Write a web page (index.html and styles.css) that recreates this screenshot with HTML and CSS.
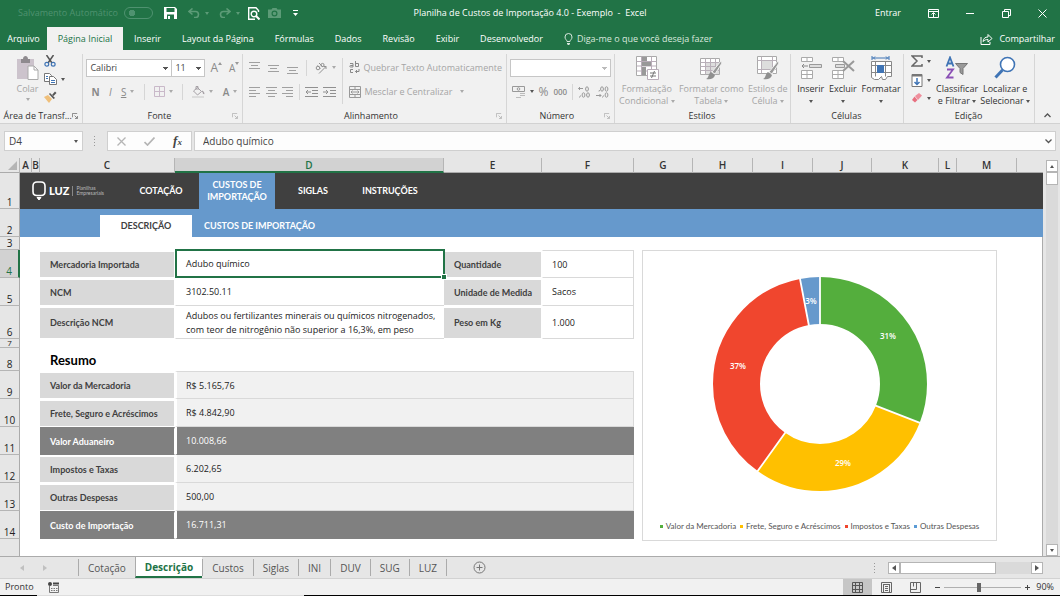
FILE: index.html
```html
<!DOCTYPE html>
<html lang="pt-BR">
<head>
<meta charset="utf-8">
<meta name="viewport" content="width=device-width, initial-scale=1">
<title>Planilha de Custos de Importação 4.0 - Exemplo - Excel</title>
<link rel="stylesheet" href="styles.css">
</head>
<body>
<div class="app">

<header class="titlebar">
  <div class="quick">
    <label class="autosave" for="autosave">Salvamento Automático</label>
    <input class="switch" id="autosave" type="checkbox" disabled>
    <button class="qbtn save" aria-label="Salvar"><svg width="13" height="12" viewBox="0 0 13 12"><path d="M0 0h11l2 2v10H0z" fill="#fff"/><path d="M2.500 1h8v4h-8zM3 7.500h7V12H3z" fill="#217346"/><path d="M4 9h2v3H4z" fill="#fff"/></svg></button>
    <button class="qbtn undo" aria-label="Desfazer"><svg width="12" height="10" viewBox="0 0 12 10" fill="none" stroke="#5c9b77" stroke-width="1.600"><path d="M4.500.5 1 3.500l3.500 3M1 3.500h6.500a3 3 0 0 1 0 6H6"/></svg><i class="caret"></i></button>
    <button class="qbtn redo" aria-label="Refazer"><svg width="12" height="10" viewBox="0 0 12 10" fill="none" stroke="#5c9b77" stroke-width="1.600"><path d="M7.500.5 11 3.500l-3.500 3M11 3.500H4.500a3 3 0 0 0 0 6H6"/></svg><i class="caret"></i></button>
    <button class="qbtn preview" aria-label="Visualizar impressão"><svg width="12" height="13" viewBox="0 0 12 13" fill="none" stroke="#fff" stroke-width="1.400"><path d="M10.500 5V3.500L8 .7H.7v11.600H7"/><circle cx="6" cy="7" r="2.800"/><path d="m8 9 3.500 3.500" stroke-width="2"/></svg></button>
    <button class="qbtn camera" aria-label="Câmera"><svg width="13" height="10" viewBox="0 0 13 10"><path d="M0 1.500h3.500L4.500 0h4l1 1.500H13V10H0z" fill="#5c9b77"/><circle cx="6.500" cy="5.500" r="2.400" fill="none" stroke="#217346" stroke-width="1.200"/></svg></button>
    <button class="qbtn more" aria-label="Personalizar"><svg width="5" height="6" viewBox="0 0 5 6" fill="#fff"><path d="M0 0h5v1H0zM0 3h5L2.500 6z"/></svg></button>
  </div>
  <h1 class="title">Planilha de Custos de Importação 4.0 - Exemplo &nbsp;-&nbsp; Excel</h1>
  <div class="window">
    <button class="signin">Entrar</button>
    <button class="wbtn" aria-label="Opções da faixa"><svg width="11" height="9" viewBox="0 0 11 9" fill="none" stroke="#fff"><path d="M.5.5h10v8H.5zM.5 2.500h10M5.500 8V4M3.500 5.500l2-2 2 2"/></svg></button>
    <button class="wbtn" aria-label="Minimizar"><svg width="9" height="9" viewBox="0 0 9 9" stroke="#fff"><path d="M0 4.500h8"/></svg></button>
    <button class="wbtn" aria-label="Restaurar"><svg width="9" height="9" viewBox="0 0 9 9" fill="none" stroke="#fff"><path d="M.5 2.500h6v6h-6zM2.500 2.500v-2h6v6h-2"/></svg></button>
    <button class="wbtn" aria-label="Fechar"><svg width="9" height="9" viewBox="0 0 9 9" stroke="#fff"><path d="m.5.5 8 8M8.500.5l-8 8"/></svg></button>
  </div>
</header>

<nav class="tabs">
  <button class="tab file">Arquivo</button>
  <button class="tab active">Página Inicial</button>
  <button class="tab">Inserir</button>
  <button class="tab">Layout da Página</button>
  <button class="tab">Fórmulas</button>
  <button class="tab">Dados</button>
  <button class="tab">Revisão</button>
  <button class="tab">Exibir</button>
  <button class="tab">Desenvolvedor</button>
  <button class="tell"><svg width="9" height="12" viewBox="0 0 9 12" fill="none" stroke="#d9e8df"><path d="M3 8.500C3 7 1 6.500 1 4a3.500 3.500 0 0 1 7 0c0 2.500-2 3-2 4.500zM3 10.500h3M3.500 11.500h2"/></svg>Diga-me o que você deseja fazer</button>
  <button class="share"><svg width="13" height="12" viewBox="0 0 13 12" fill="none" stroke="#fff"><path d="M1 4v7.500h9V9M3 8.500C3.500 5.500 5 4 8 4V1.500l4 4-4 3.500V6.500C6 6.500 4.500 7 3 8.500z"/></svg>Compartilhar</button>
</nav>

<section class="ribbon">
  <div class="group g-clip">
    <div class="body">
      <button class="big off paste"><svg width="23" height="24" viewBox="0 0 23 24"><path d="M1 3h17v20H1z" fill="#ccc3cc"/><path d="M5 3h2c0-4 5-4 5 0h2v4H5z" fill="#8e8a8e"/><path d="M12 10h6l4 4v9.500H12z" fill="#fff" stroke="#aaa"/><path d="M18 10v4h4" fill="none" stroke="#aaa"/></svg><span>Colar</span><i class="caret"></i></button>
      <div class="stack clipstack">
        <button class="ib" aria-label="Recortar"><svg width="12" height="12" viewBox="0 0 12 12" fill="none"><path d="M2.500 0 8 8M9.500 0 4 8" stroke="#555" stroke-width="1.500"/><circle cx="2.800" cy="9.300" r="1.900" stroke="#3f74b5" stroke-width="1.200"/><circle cx="9.200" cy="9.300" r="1.900" stroke="#3f74b5" stroke-width="1.200"/></svg></button>
        <button class="ib" aria-label="Copiar"><svg width="13" height="12" viewBox="0 0 13 12" fill="#fff" stroke="#777"><path d="M.5.500h5l2 2v6h-7z"/><path d="M5.500 3.500h4l3 3v5h-7z"/><path d="M2 3.500h2M2 5.500h2M7 7.500h4M7 9.500h4" stroke="#3f74b5"/></svg><i class="caret dark"></i></button>
        <button class="ib" aria-label="Pincel"><svg width="13" height="12" viewBox="0 0 13 12"><path d="M0 6 4 4l4 4-3 4z" fill="#efbf7a"/><path d="m5 3 1-1 5 5-1.500 1z" fill="#555"/><path d="m8 4 3-3.500L12.500 2 9.500 5z" fill="#555"/></svg></button>
      </div>
    </div>
    <footer><span>Área de Transf...</span><svg class="launch dk" width="6" height="6" viewBox="0 0 7 7"><path d="M.5 5V.5H6M3 3l3 3M6.500 3.500v3h-3"/></svg></footer>
  </div>

  <div class="group g-font">
    <div class="body rows">
      <div class="line">
        <select class="sel fname" aria-label="Fonte"><option>Calibri</option></select><select class="sel fsize" aria-label="Tamanho"><option>11</option></select>
        <button class="ib grow" aria-label="Aumentar fonte">A<svg width="4" height="3" viewBox="0 0 4 3"><path d="M0 3h4L2 0z" fill="#999"/></svg></button>
        <button class="ib shrink" aria-label="Diminuir fonte">A<svg width="4" height="3" viewBox="0 0 4 3"><path d="M0 0h4L2 3z" fill="#999"/></svg></button>
      </div>
      <div class="line second">
        <button class="ib ltr"><b>N</b></button><button class="ib ltr"><em>I</em></button><button class="ib ltr"><u>S</u><i class="caret"></i></button><i class="sep"></i>
        <button class="ib" aria-label="Bordas"><svg width="11" height="11" viewBox="0 0 11 11" fill="none" stroke="#c9b9c9"><path d="M.5.5h10v10H.5zM5.500.5v10M.5 5.500h10"/></svg><i class="caret"></i></button><i class="sep"></i>
        <button class="ib" aria-label="Preenchimento"><svg width="13" height="12" viewBox="0 0 13 12" fill="none" stroke="#a5a0a5"><path d="m1.500 5 4-3.500 4 4-4 3.500zM4 4V.500h2V4" /><path d="M10 5c1.500 1 2 2 1.500 3" stroke-width="1.500"/><path d="M0 11h12" stroke="#dcdcdc" stroke-width="2"/></svg><i class="caret"></i></button>
        <button class="ib ltr fcolor">A<i class="caret"></i></button>
      </div>
    </div>
    <footer><span>Fonte</span><svg class="launch" width="6" height="6" viewBox="0 0 7 7"><path d="M.5 5V.5H6M3 3l3 3M6.500 3.500v3h-3"/></svg></footer>
  </div>

  <div class="group g-align">
    <div class="body">
      <div class="rows alignleft">
        <div class="line">
          <button class="ib" aria-label="Alinhar acima"><svg width="11" height="12" viewBox="0 0 11 12" stroke="#a0a0a0"><path d="M0 .5h11M2 3.500h7M0 6.500h11"/></svg></button>
          <button class="ib" aria-label="Alinhar no meio"><svg width="11" height="12" viewBox="0 0 11 12" stroke="#a0a0a0"><path d="M0 3.500h11M2 6.500h7M0 9.500h11"/></svg></button>
          <button class="ib" aria-label="Alinhar abaixo"><svg width="11" height="12" viewBox="0 0 11 12" stroke="#a0a0a0"><path d="M0 5.500h11M2 8.500h7M0 11.500h11"/></svg></button>
          <i class="sep"></i>
          <button class="ib" aria-label="Orientação"><svg width="13" height="12" viewBox="0 0 13 12" fill="none" stroke="#909090"><circle cx="3" cy="6" r="1.800"/><path d="m2.500 3.500 3 3"/><path d="m4 1 4 4"/><circle cx="7.500" cy="3" r="1.600"/><path d="m4 11.500 7-7M8.500 4.500H11V7"/></svg><i class="caret"></i></button>
        </div>
        <div class="line">
          <button class="ib" aria-label="Esquerda"><svg width="11" height="10" viewBox="0 0 11 10" stroke="#a0a0a0"><path d="M0 .5h11M0 3.500h7M0 6.500h11M0 9.500h7"/></svg></button>
          <button class="ib" aria-label="Centro"><svg width="11" height="10" viewBox="0 0 11 10" stroke="#a0a0a0"><path d="M0 .5h11M2 3.500h7M0 6.500h11M2 9.500h7"/></svg></button>
          <button class="ib" aria-label="Direita"><svg width="11" height="10" viewBox="0 0 11 10" stroke="#a0a0a0"><path d="M0 .5h11M4 3.500h7M0 6.500h11M4 9.500h7"/></svg></button>
          <i class="sep"></i>
          <button class="ib" aria-label="Diminuir recuo"><svg width="13" height="10" viewBox="0 0 13 10" fill="none" stroke="#909090"><path d="M0 .5h13M7 3.500h6M7 6.500h6M0 9.500h13M6 5H1M3 3 1 5l2 2"/></svg></button>
          <button class="ib" aria-label="Aumentar recuo"><svg width="13" height="10" viewBox="0 0 13 10" fill="none" stroke="#909090"><path d="M0 .5h13M7 3.500h6M7 6.500h6M0 9.500h13M0 5h5M3 3l2 2-2 2"/></svg></button>
        </div>
      </div>
      <i class="sep tall"></i>
      <div class="rows alignright">
        <button class="txt"><svg width="11" height="13" viewBox="0 0 11 13" fill="none" stroke="#888"><path d="M1 2.500h3V6H1.500c-1 0-1-1.500 0-1.500H4M6.500 0v5.500h3v-3h-3M4 8.500H1.500v3H4M10 8v2.500H6.500M8 9l-1.500 1.500L8 12"/></svg>Quebrar Texto Automaticamente</button>
        <button class="txt"><svg width="12" height="12" viewBox="0 0 12 12" fill="none" stroke="#999"><path d="M.5.5h11v11H.5zM.5 3.500h11M.5 8.500h11M6 .5v3M6 8.500v3M2 6h8M3.500 4.500 2 6l1.500 1.500M8.500 4.500 10 6 8.500 7.500"/></svg>Mesclar e Centralizar<i class="caret"></i></button>
      </div>
    </div>
    <footer><span>Alinhamento</span><svg class="launch" width="6" height="6" viewBox="0 0 7 7"><path d="M.5 5V.5H6M3 3l3 3M6.500 3.500v3h-3"/></svg></footer>
  </div>

  <div class="group g-num">
    <div class="body rows">
      <div class="line"><select class="sel nfmt" aria-label="Formato de número"><option></option></select></div>
      <div class="line nums">
        <button class="ib" aria-label="Moeda"><svg width="14" height="12" viewBox="0 0 14 12" fill="none" stroke="#999"><path d="M.5.5h12v5H.5z"/><circle cx="6.500" cy="3" r="1.300"/><path d="M8 7.500h5M8 9.500h5M4 11.500h5" stroke="#bbb"/></svg><i class="caret dark"></i></button>
        <button class="ib pct">%</button>
        <button class="ib zeros">000</button>
        <i class="sep"></i>
        <button class="ib dec" aria-label="Aumentar casas"><svg width="13" height="12" viewBox="0 0 13 12" fill="none" stroke="#999"><path d="M5 2.500H.5M2 1 .5 2.500 2 4M2.500 9.500l-1 2"/><ellipse cx="9" cy="3" rx="1.400" ry="2.200"/><ellipse cx="5.500" cy="9" rx="1.400" ry="2.200"/><ellipse cx="10" cy="9" rx="1.400" ry="2.200"/></svg></button>
        <button class="ib dec" aria-label="Diminuir casas"><svg width="13" height="12" viewBox="0 0 13 12" fill="none" stroke="#999"><path d="M0 9.500h5M3.500 8 5 9.500 3.500 11M7.500 9.500l-1 2M3.500 4l-.5 1.500"/><ellipse cx="6" cy="3" rx="1.400" ry="2.200"/><ellipse cx="10.500" cy="3" rx="1.400" ry="2.200"/><ellipse cx="10.500" cy="9" rx="1.400" ry="2.200"/></svg></button>
      </div>
    </div>
    <footer><span>Número</span><svg class="launch" width="6" height="6" viewBox="0 0 7 7"><path d="M.5 5V.5H6M3 3l3 3M6.500 3.500v3h-3"/></svg></footer>
  </div>

  <div class="group g-style">
    <div class="body spread">
      <button class="big off"><svg width="24" height="24" viewBox="0 0 24 24" fill="none"><path d="M1.500.5h20v19h-20z" fill="#fff" stroke="#aaa"/><path d="M6.500.5v19M16.500.5v19M1.500 5.500h20M1.500 10h20M1.500 15h20" stroke="#b9adb9"/><path d="M7 1h5v4H7zM7 6h9v4H7zM7 11h4v4H7zM7 15h4v4H7z" fill="#999"/><path d="M12.500 13.500h11v10h-11z" fill="#fff" stroke="#b9adb9"/><path d="M15 17h6M15 20h6M19.500 15l-3 7" stroke="#777"/></svg><span>Formatação<br>Condicional <i class="caret"></i></span></button>
      <button class="big off"><svg width="24" height="24" viewBox="0 0 24 24" fill="none"><path d="M1.500 2.500h19v16h-19z" fill="#fff" stroke="#aaa"/><path d="M6 7h14v11H6z" fill="#ddd"/><path d="M6.500 2.500v16M11.500 2.500v16M16.500 2.500v16M1.500 6.500h19M1.500 10.500h19M1.500 14.500h19" stroke="#b9b0b9"/><path d="m23 7-7 11-3-2L22 5z" fill="#999" stroke="#f1f1f1"/><path d="m12 16 4 3c-1 4-5 5-9 4 3-1 2-5 5-7z" fill="#8f8f8f"/></svg><span>Formatar como<br>Tabela <i class="caret"></i></span></button>
      <button class="big off"><svg width="24" height="24" viewBox="0 0 24 24" fill="none"><path d="M1.500.5h19v17h-19z" fill="#fff" stroke="#aaa"/><path d="M5.500 4.500h11v9h-11z" fill="#ddd" stroke="#b9b0b9"/><path d="M5.500.5v17M16.500.5v17M1.500 4.500h19M1.500 13.500h19" stroke="#b9b0b9"/><path d="m23 7-7 11-3-2L22 5z" fill="#999" stroke="#f1f1f1"/><path d="m12 16 4 3c-1 4-5 5-9 4 3-1 2-5 5-7z" fill="#8f8f8f"/></svg><span>Estilos de<br>Célula <i class="caret"></i></span></button>
    </div>
    <footer><span>Estilos</span></footer>
  </div>

  <div class="group g-cells">
    <div class="body spread">
      <button class="big"><svg width="22" height="24" viewBox="0 0 22 24" fill="#fff" stroke="#aaa"><path d="M1.500 1.500h11v4h-11zM7 1.500v4M1.500 14.500h11v8h-11zM7 14.500v8M1.500 18.500h11"/><path d="M9.500 8.500h12v3h-12z" fill="#ddd" stroke="#999"/><path d="M8 10H2M4 8l-2 2 2 2" fill="none" stroke="#888"/></svg><span>Inserir<br><i class="caret dark"></i></span></button>
      <button class="big"><svg width="24" height="24" viewBox="0 0 24 24" fill="#fff" stroke="#aaa"><path d="M1.500 1.500h11v4h-11zM7 1.500v4M1.500 14.500h11v8h-11zM7 14.500v8M1.500 18.500h11"/><path d="M4.500 8.500h9v3h-9z" fill="#ddd" stroke="#999"/><path d="m12 5 11 10M23 5 12 15" stroke="#999" stroke-width="2"/></svg><span>Excluir<br><i class="caret dark"></i></span></button>
      <button class="big"><svg width="24" height="24" viewBox="0 0 24 24" fill="#fff" stroke="#888"><path d="M2.500 5.500h20v15h-4l-2 3h-3l-1-3-3 3h-4l-3-2zM6.500 5.500v15M16.500 5.500v15M2.500 9.500h20M2.500 16.500h20"/><path d="M8.500 9.500h6v7h-6z" fill="#3f74b5" stroke="#3f74b5"/><path d="M3 2h17M3 0v4M20 0v4M6 .500 4.500 2 6 3.500M17 .500 18.500 2 17 3.500" fill="none" stroke="#3f74b5"/></svg><span>Formatar<br><i class="caret dark"></i></span></button>
    </div>
    <footer><span>Células</span></footer>
  </div>

  <div class="group g-edit">
    <div class="body">
      <div class="stack editstack">
        <button class="ib" aria-label="Soma"><svg width="12" height="12" viewBox="0 0 12 12" fill="none" stroke="#666" stroke-width="1.500"><path d="M11 3V1H1l5 5-5 5h10V9"/></svg><i class="caret dark"></i></button>
        <button class="ib" aria-label="Preencher"><svg width="12" height="13" viewBox="0 0 12 13" fill="#fff" stroke="#777"><path d="M1 .5h10v12H1z"/><path d="M1 1.500h10" stroke-width="2"/><path d="M6 4v6.500M3.500 8 6 10.500 8.500 8" fill="none" stroke="#3f74b5" stroke-width="1.500"/></svg><i class="caret dark"></i></button>
        <button class="ib" aria-label="Limpar"><svg width="12" height="10" viewBox="0 0 12 10"><path d="m4 3 4-3 3 2.500L7 7z" fill="#ef8f9d"/><path d="M3.500 3.500 6.500 7 4 9.500 1 7z" fill="#e87080"/></svg><i class="caret dark"></i></button>
      </div>
      <button class="big"><svg width="24" height="24" viewBox="0 0 24 24" fill="none"><path d="m1.500 10.500 3.500-9 3.500 9M2.700 7.500h4.600" stroke="#3f74b5" stroke-width="1.800"/><path d="M2 13.500h6l-6 8h6.500" stroke="#8a4fb5" stroke-width="1.800"/><path d="M10.500 7.500h12l-4.500 5v6l-3-2v-4z" fill="#999" stroke="#777"/></svg><span>Classificar<br>e Filtrar <i class="caret dark"></i></span></button>
      <button class="big"><svg width="24" height="24" viewBox="0 0 24 24" fill="none" stroke="#3f74b5"><circle cx="14.500" cy="8.500" r="7" fill="#fff" stroke-width="1.600"/><path d="m9.500 14-7 7.500" stroke-width="3"/></svg><span>Localizar e<br>Selecionar <i class="caret dark"></i></span></button>
    </div>
    <footer><span>Edição</span></footer>
  </div>
  <button class="collapse" aria-label="Recolher faixa"><svg width="7" height="5" viewBox="0 0 7 5" fill="none" stroke="#555" stroke-width="1.300"><path d="m.5 4 3-3 3 3"/></svg></button>
</section>

<section class="formula">
  <div class="namebox"><input aria-label="Caixa de nome" value="D4"><i class="caret dark"></i></div>
  <svg class="grip" width="2" height="10" viewBox="0 0 2 10" fill="#999"><path d="M0 0h1v1H0zM0 3h1v1H0zM0 6h1v1H0zM0 9h1v1H0z"/></svg>
  <div class="fbtns">
    <button aria-label="Cancelar"><svg width="9" height="9" viewBox="0 0 9 9" stroke="#b5b5b5" stroke-width="1.300"><path d="m.5.5 8 8M8.500.5l-8 8"/></svg></button>
    <button aria-label="Inserir"><svg width="11" height="9" viewBox="0 0 11 9" fill="none" stroke="#b5b5b5" stroke-width="1.700"><path d="m.5 5 3 3 7-7.500"/></svg></button>
    <button class="fx"><em>f<small>x</small></em></button>
  </div>
  <div class="fbox"><input aria-label="Barra de fórmulas" value="Adubo químico"><svg width="7" height="5" viewBox="0 0 7 5" fill="none" stroke="#555" stroke-width="1.300"><path d="m.5.5 3 3 3-3"/></svg></div>
</section>

<main class="workspace">
<div class="sheetwrap">
<table class="sheet">
  <colgroup><col class="w20"><col class="w12"><col class="w8"><col class="w135"><col class="w269"><col class="w98"><col class="w92"><col class="w59"><col class="w60"><col class="w60"><col class="w59"><col class="w67"><col class="w18"><col class="w60"><col class="w26"></colgroup>
  <thead>
    <tr class="cols"><th class="corner"><svg width="9" height="9" viewBox="0 0 9 9"><path d="M9 0v9H0z" fill="#b5b5b5"/></svg></th><th>A</th><th>B</th><th>C</th><th class="on">D</th><th>E</th><th>F</th><th>G</th><th>H</th><th>I</th><th>J</th><th>K</th><th>L</th><th>M</th><th class="end"></th></tr>
  </thead>
  <tbody>
    <tr class="h36"><th class="rn">1</th><td class="navcell" colspan="14"><nav class="mainnav">
      <div class="brand"><svg width="14" height="20" viewBox="0 0 14 20" fill="none" stroke="#fff" stroke-width="1.600"><path d="M5 14.500c-3 0-4-1.500-4-4V5c0-2.500 1.500-4 4-4h4c2.500 0 4 1.500 4 4v5.500c0 2.500-1 4-4 4z"/><path d="M5 16.500h4L7 19z" fill="#fff" stroke-width="1"/></svg><strong>LUZ</strong><small>Planilhas<br>Empresariais</small></div>
      <a href="#" class="n1">COTAÇÃO</a><a href="#" class="n2">CUSTOS DE<br>IMPORTAÇÃO</a><a href="#" class="n3">SIGLAS</a><a href="#" class="n4">INSTRUÇÕES</a>
    </nav></td></tr>
    <tr class="h28"><th class="rn">2</th><td class="subcell" colspan="14"><nav class="subnav"><a href="#" class="cur">DESCRIÇÃO</a><a href="#">CUSTOS DE IMPORTAÇÃO</a></nav></td></tr>
    <tr class="h13"><th class="rn">3</th><td colspan="14"></td></tr>
    <tr class="h28"><th class="rn on">4</th><td></td><td></td><th class="lab">Mercadoria Importada</th><td class="val selected">Adubo químico</td><th class="lab">Quantidade</th><td class="val side top">100</td>
      <td class="chartcell" colspan="8" rowspan="12">
        <figure class="chart">
          <svg class="donut" viewBox="0 0 216 216" role="img" aria-label="Composição do custo de importação">
            <g fill="none" stroke-width="47" transform="rotate(-90 108 108)">
              <circle cx="108" cy="108" r="83.500" stroke="#54ae3d" pathLength="10000" stroke-dasharray="3091 20000"/>
              <circle cx="108" cy="108" r="83.500" stroke="#ffc000" pathLength="10000" stroke-dasharray="2898 20000" stroke-dashoffset="-3091"/>
              <circle cx="108" cy="108" r="83.500" stroke="#f0462e" pathLength="10000" stroke-dasharray="3712 20000" stroke-dashoffset="-5989"/>
              <circle cx="108" cy="108" r="83.500" stroke="#6699cc" pathLength="10000" stroke-dasharray="299 20000" stroke-dashoffset="-9701"/>
            </g>
            <path d="M108 49V0M163 129.400l45.600 17.800M73.700 156l-28.600 39.800M97 50 87.800 1.900" stroke="#fff" stroke-width="1.800"/>
            <g class="pct-label"><text x="176" y="63">31%</text><text x="131" y="190">29%</text><text x="26" y="93">37%</text><text x="99" y="28">3%</text></g>
          </svg>
          <figcaption><span class="k1">Valor da Mercadoria</span><span class="k2">Frete, Seguro e Acréscimos</span><span class="k3">Impostos e Taxas</span><span class="k4">Outras Despesas</span></figcaption>
        </figure>
      </td></tr>
    <tr class="h28"><th class="rn">5</th><td></td><td></td><th class="lab">NCM</th><td class="val">3102.50.11</td><th class="lab">Unidade de Medida</th><td class="val side">Sacos</td></tr>
    <tr class="h33"><th class="rn">6</th><td></td><td></td><th class="lab">Descrição NCM</th><td class="val wrap">Adubos ou fertilizantes minerais ou químicos nitrogenados,<br>com teor de nitrogênio não superior a 16,3%, em peso</td><th class="lab">Peso em Kg</th><td class="val side">1.000</td></tr>
    <tr class="h9"><th class="rn tiny">7</th><td colspan="6"></td></tr>
    <tr class="h23"><th class="rn">8</th><td></td><td></td><td class="resumo" colspan="4"><h2>Resumo</h2></td></tr>
    <tr class="h28"><th class="rn">9</th><td></td><td></td><th class="lab">Valor da Mercadoria</th><td class="val sum top" colspan="3">R$ 5.165,76</td></tr>
    <tr class="h28"><th class="rn">10</th><td></td><td></td><th class="lab">Frete, Seguro e Acréscimos</th><td class="val sum" colspan="3">R$ 4.842,90</td></tr>
    <tr class="h28"><th class="rn">11</th><td></td><td></td><th class="lab total">Valor Aduaneiro</th><td class="val sum total" colspan="3">10.008,66</td></tr>
    <tr class="h28"><th class="rn">12</th><td></td><td></td><th class="lab">Impostos e Taxas</th><td class="val sum" colspan="3">6.202,65</td></tr>
    <tr class="h28"><th class="rn">13</th><td></td><td></td><th class="lab">Outras Despesas</th><td class="val sum" colspan="3">500,00</td></tr>
    <tr class="h28"><th class="rn">14</th><td></td><td></td><th class="lab total">Custo de Importação</th><td class="val sum total" colspan="3">16.711,31</td></tr>
    <tr class="h17"><th class="rn last"></th><td colspan="6"></td></tr>
  </tbody>
</table>
</div>
<div class="vscroll"><button aria-label="Para cima"><i class="caret up dark"></i></button><div class="vtrack"><div class="vthumb"></div></div><button aria-label="Para baixo"><i class="caret dark"></i></button></div>
</main>

<nav class="sheets">
  <div class="arrows"><i class="left"></i><i class="right"></i></div>
  <button>Cotação</button><button class="active">Descrição</button><button>Custos</button><button>Siglas</button><button>INI</button><button>DUV</button><button>SUG</button><button>LUZ</button>
  <button class="add" aria-label="Nova planilha"><svg width="13" height="13" viewBox="0 0 13 13" fill="none" stroke="#777"><circle cx="6.500" cy="6.500" r="5.500"/><path d="M6.500 3.500v6M3.500 6.500h6"/></svg></button>
  <svg class="hgrip" width="2" height="10" viewBox="0 0 2 10" fill="#999"><path d="M0 0h1v1H0zM0 3h1v1H0zM0 6h1v1H0zM0 9h1v1H0z"/></svg>
  <div class="hscroll"><button aria-label="Esquerda"><i class="left"></i></button><div class="htrack"><div class="hthumb"></div></div><button aria-label="Direita"><i class="right"></i></button></div>
</nav>

<footer class="status">
  <span>Pronto</span>
  <svg class="macro" width="11" height="11" viewBox="0 0 11 11" fill="none" stroke="#777"><path d="M1.500 4v6.500h9v-7H5"/><path d="M5 1.500h6" stroke="#444" stroke-width="2"/><path d="M3 6.500h7M3 8.500h7" stroke-dasharray="1.500 1"/><circle cx="2" cy="2" r="2" fill="#444" stroke="none"/></svg>
  <div class="views">
    <button class="on" aria-label="Normal"><svg width="11" height="11" viewBox="0 0 11 11" fill="none" stroke="#555"><path d="M.5.5h10v10H.5zM3.500.5v10M7.500.5v10M.5 3.500h10M.5 7.500h10"/></svg></button>
    <button aria-label="Layout da página"><svg width="11" height="11" viewBox="0 0 11 11" fill="none" stroke="#666"><path d="M.5.5h10v10H.5zM2.500 2v8M8.500 2v8M2.500 2.500h6M4 4.500h3M4 6.500h3M4 8.500h3"/></svg></button>
    <button aria-label="Quebra de página"><svg width="11" height="11" viewBox="0 0 11 11" fill="none" stroke="#666"><path d="M.5.5h10v10H.5zM.5 7.500h6v-7M3.500.5v4"/></svg></button>
  </div>
  <button class="zb" aria-label="Reduzir"><svg width="5" height="5" viewBox="0 0 5 5" stroke="#444"><path d="M0 2.500h5"/></svg></button>
  <input class="zoom" type="range" min="10" max="190" value="90" aria-label="Zoom">
  <button class="zb" aria-label="Ampliar"><svg width="5" height="5" viewBox="0 0 5 5" stroke="#444"><path d="M0 2.500h5M2.500 0v5"/></svg></button>
  <output class="zval">90%</output>
</footer>
<div class="taskbar"></div>
</div>
</body>
</html>
```
FILE: styles.css
```css
* { box-sizing: border-box; }
body { margin: 0; font-family: "Open Sans", "Noto Sans", sans-serif; font-size: 9px; line-height: 12px; color: #333; background: #e6e6e6; }
button, input, select { font: inherit; color: inherit; margin: 0; padding: 0; border: 0; background: none; white-space: nowrap; }
a { color: inherit; text-decoration: none; }
svg { display: block; flex: none; }
.app { display: flex; flex-direction: column; min-height: 100vh; }

.caret { display: inline-block; flex: none; width: 0; height: 0; border: 2px solid transparent; border-top: 3px solid #aaa; border-bottom: 0; vertical-align: middle; }
.caret.dark { border-top-color: #555; }
.caret.up { border-top: 0; border-bottom: 3px solid #555; }

/* Title bar */
.titlebar { display: grid; grid-template-columns: 1fr auto 1fr; align-items: center; height: 26px; background: #217346; color: #fff; }
.quick { display: flex; align-items: center; padding-left: 18px; }
.autosave { color: #4f9270; margin-right: 6px; }
.switch { appearance: none; width: 29px; height: 12px; border: 1px solid #4f9270; border-radius: 6px; background: radial-gradient(circle at 7px 5px, #4f9270 3px, transparent 3px); margin-right: 11px; }
.qbtn { display: flex; align-items: center; gap: 5px; margin-right: 10px; }
.qbtn .caret { border-top-color: #5c9b77; }
.undo { margin-left: 1px; }
.redo, .preview { margin-right: 8px; }
.qbtn.more { margin: 0 0 0 2px; }
.title { margin: 0; font-size: 9px; font-weight: 400; }
.window { display: flex; justify-content: flex-end; align-items: center; padding-right: 13px; }
.signin { margin-right: 27px; }
.wbtn { margin-left: 27px; }
.signin + .wbtn { margin-left: 0; }

/* Ribbon tabs */
.tabs { display: flex; align-items: stretch; height: 24px; background: #217346; color: #fff; }
.tab { padding: 1px 10px 0 11px; }
.tab.file { width: 47px; padding: 1px 6px 0; }
.tab.active { width: 76px; padding: 0; background: #f1f1f1; color: #217346; margin-top: 1px; }
.tell { display: flex; align-items: center; gap: 4px; padding: 1px 11px 0; color: #d9e8df; }
.share { display: flex; align-items: center; gap: 6px; margin-left: auto; padding: 1px 5px 0 0; }

/* Ribbon */
.ribbon { display: flex; height: 74px; background: #f1f1f1; border-bottom: 1px solid #d2d2d2; }
.group { display: flex; flex-direction: column; min-width: 0; margin-top: 4px; border-right: 1px solid #d6d6d6; }
.g-clip { flex: 83 0 0; } .g-font { flex: 160 0 0; } .g-align { flex: 264 0 0; } .g-num { flex: 108 0 0; } .g-style { flex: 176 0 0; } .g-cells { flex: 113 0 0; } .g-edit { flex: 131 0 0; }
.group .body { flex: 1; display: flex; min-height: 0; }
.group footer { display: flex; align-items: center; height: 14px; padding: 0 4px 0 3px; color: #333; }
.group footer span { flex: 1; text-align: center; white-space: nowrap; }
.launch { fill: none; stroke: #b5b5b5; }
.launch.dk { stroke: #777; }
.group .rows { display: flex; flex-direction: column; gap: 5px; padding-top: 4px; }
.line { display: flex; align-items: center; height: 19px; }
.ib { display: flex; align-items: center; gap: 4px; color: #8a8a8a; }
.sep { width: 1px; height: 16px; background: #d6d6d6; }
.sep.tall { height: 46px; margin-top: 4px; }
.big { display: flex; flex-direction: column; align-items: center; gap: 3px; padding-top: 2px; }
.big.off { color: #a5a5a5; }
.paste { margin: 0 5px 0 16px; }
.stack { display: flex; flex-direction: column; justify-content: space-between; height: 50px; padding: 1px 0; }
.sel { appearance: none; height: 18px; padding: 0 3px; background-color: #fff; background-image: linear-gradient(#555, #555), linear-gradient(#555, #555), linear-gradient(#555, #555); background-repeat: no-repeat; background-size: 5px 1px, 3px 1px, 1px 1px; background-position: right 3px top 7px, right 4px top 8px, right 5px top 9px; border: 1px solid #c6c6c6; color: #444; border-radius: 0; }
.g-font .line { padding-left: 3px; }
.fname { width: 86px; }
.fsize { width: 34px; margin-left: -1px; }
.grow { font-size: 12px; gap: 0; margin-left: 5px; align-items: flex-start; }
.shrink { font-size: 10px; gap: 0; margin-left: 7px; align-items: flex-start; }
.g-font .second { justify-content: space-between; padding: 0 5px 0 8px; }
.ltr { font-size: 10px; }
.fcolor { font-weight: 600; }
.alignleft .line { width: 99px; padding: 0 6px; justify-content: space-between; }
.alignright { padding-left: 6px; }
.txt { display: flex; align-items: center; gap: 3px; height: 19px; color: #a5a5a5; }
.txt .caret { margin-left: 5px; }
.g-num .rows { padding-left: 3px; padding-right: 3px; }
.nfmt { width: 100%; background-image: linear-gradient(#bbb, #bbb), linear-gradient(#bbb, #bbb), linear-gradient(#bbb, #bbb); }
.nums { justify-content: space-between; padding: 0 2px; }
.pct { font-size: 12px; }
.zeros { font-size: 8px; font-weight: 600; }
.spread { justify-content: space-around; }
.g-style .spread { padding-left: 2px; }
.g-cells .spread { padding-left: 4px; }
.editstack { width: 29px; padding-left: 7px; }
.g-edit .big { flex: 1; min-width: 0; }
.g-edit .body { padding-right: 5px; }
.collapse { flex: 25 0 0; display: flex; justify-content: center; align-items: flex-end; padding-bottom: 5px; }

/* Formula bar */
.formula { display: flex; align-items: center; height: 34px; padding: 0 4px; background: #e6e6e6; font-size: 10px; color: #444; }
.namebox, .fbtns, .fbox { display: flex; align-items: center; height: 20px; background: #fdfdfd; border: 1px solid #cfcfcf; }
.namebox { width: 79px; padding: 0 4px; }
.namebox input { width: 100%; }
.grip { margin: 0 11px; }
.fbtns { width: 85px; justify-content: space-around; margin-right: 2px; }
.fx { font-family: "Liberation Serif", serif; font-size: 13px; font-weight: 700; }
.fx small { font-size: 9px; }
.fbox { flex: 1; padding: 0 3px 0 8px; }
.fbox input { flex: 1; }

/* Sheet */
.workspace { flex: 1; display: flex; background: #e6e6e6; }
.sheetwrap { flex: 1; min-width: 0; background: #fff; border-right: 1px solid #ababab; }
.sheet { width: 100%; table-layout: fixed; border-collapse: separate; border-spacing: 0; line-height: 12px; }
.sheet th, .sheet td { padding: 0; }
.w8 { width: 8px; } .w12 { width: 12px; } .w18 { width: 18px; } .w20 { width: 20px; } .w26 { width: 26px; } .w59 { width: 59px; } .w60 { width: 60px; } .w67 { width: 67px; } .w92 { width: 92px; } .w98 { width: 98px; } .w135 { width: 135px; } .w269 { width: 269px; }
.h9 { height: 9px; } .h13 { height: 13px; } .h17 { height: 17px; } .h23 { height: 23px; } .h28 { height: 28px; } .h33 { height: 33px; } .h36 { height: 36px; }
.cols { height: 15px; }
.cols th { background: #e6e6e6; border-right: 1px solid #b5b5b5; border-bottom: 1px solid #ababab; color: #333; font-size: 10px; font-weight: 600; }
.cols .corner svg { margin-left: auto; margin-right: 2px; }
.cols .on { background: #d2d2d2; color: #217346; border-bottom: 2px solid #217346; }
.cols .end { border-right: 0; }
.rn { background: #e6e6e6; border-right: 1px solid #ababab; border-bottom: 1px solid #b5b5b5; vertical-align: bottom; font-size: 10px; font-weight: 400; color: #222; }
.rn.on { background: #d2d2d2; color: #217346; border-right: 2px solid #217346; }
.rn.tiny { font-size: 8px; line-height: 8px; }
.rn.last { border-bottom: 0; }
.navcell { background: #404040; }
.mainnav { display: flex; align-items: stretch; height: 36px; color: #fff; font-family: Lato, sans-serif; font-weight: 700; }
.mainnav a { display: flex; align-items: center; justify-content: center; text-align: center; }
.brand { display: flex; align-items: center; gap: 3px; width: 103px; padding-left: 12px; }
.brand strong { font-size: 11px; }
.brand small { padding-left: 3px; border-left: 1px solid #888; font-size: 5px; line-height: 5px; font-weight: 400; color: #bbb; }
.n1, .n2, .n3 { width: 76px; } .n4 { width: 78px; } .n2 { background: #6699cc; }
.subcell { background: #6699cc; vertical-align: bottom; }
.subnav { display: flex; align-items: stretch; height: 22px; padding-left: 80px; gap: 12px; color: #fff; font-family: Lato, sans-serif; font-weight: 700; }
.subnav a { display: flex; align-items: center; }
.subnav .cur { width: 92px; justify-content: center; background: #fff; color: #404040; }
.lab { background: #d9d9d9; border-top: 2px solid #fff; border-bottom: 1px solid #fff; border-right: 1px solid #fff; text-align: left; color: #404040; font-family: Lato, sans-serif; font-size: 9px; font-weight: 700; white-space: nowrap; }
.sheet .lab { padding-left: 10px; }
.val { border-bottom: 1px solid #d9d9d9; border-left: 1px solid #fff; font-size: 9px; color: #222; }
.sheet .val { padding-left: 10px; padding-top: 1px; }
.val.wrap { line-height: 14px; white-space: nowrap; }
.val.side { border-right: 1px solid #d9d9d9; }
.sheet .side, .sheet .sum { padding-left: 9px; }
.val.sum { background: #f1f1f1; border-left: 2px solid #fff; border-right: 1px solid #d9d9d9; }
.val.top { border-top: 1px solid #d9d9d9; }
.lab.total { background: #808080; color: #fff; border-top-color: #808080; border-bottom-color: #808080; }
.val.total { background: #808080; color: #fff; border-right-color: #808080; border-bottom-color: #808080; }
.val.selected { position: relative; }
.val.selected::before { content: ""; position: absolute; inset: -1px; border: 2px solid #217346; }
.val.selected::after { content: ""; position: absolute; right: -2px; bottom: -2px; width: 4px; height: 4px; background: #217346; outline: 1px solid #fff; }
.resumo h2 { margin: 0; padding-left: 10px; font-family: Lato, sans-serif; font-size: 13px; line-height: 16px; font-weight: 700; color: #000; }
.chartcell { vertical-align: top; }
.chart { display: flex; flex-direction: column; align-items: center; justify-content: space-between; height: 291px; margin: 0 46px 0 8px; padding: 25px 0 8px; border: 1px solid #d9d9d9; }
.donut { width: 216px; height: 216px; }
.pct-label { fill: #fff; font-size: 8px; font-weight: 600; text-anchor: middle; }
.chart figcaption { display: flex; gap: 4px; font-size: 8px; font-family: Lato, sans-serif; color: #555; white-space: nowrap; }
.chart figcaption span::before { content: ""; display: inline-block; width: 3px; height: 3px; margin-right: 3px; vertical-align: middle; background: #54ae3d; }
.chart .k2::before { background: #ffc000; }
.chart .k3::before { background: #f0462e; }
.chart .k4::before { background: #5b9bd5; }

.vscroll { display: flex; flex-direction: column; width: 17px; padding: 2px 2px 0 3px; }
.vscroll button { display: flex; align-items: center; justify-content: center; height: 12px; background: #fff; border: 1px solid #b5b5b5; }
.vtrack { flex: 1; background: #dadada; }
.vthumb { height: 13px; background: #fff; border: 1px solid #b5b5b5; }

/* Sheet tabs */
.sheets { display: flex; align-items: stretch; height: 22px; background: #e6e6e6; border-top: 1px solid #ababab; font-size: 10px; color: #555; }
.sheets > button { padding: 0 9px; border-left: 1px solid #ababab; margin: 2px 0; }
.sheets > .active { margin: 0; background: #fff; color: #217346; font-weight: 700; border-bottom: 2px solid #217346; }
.arrows { display: flex; align-items: center; gap: 19px; width: 78px; padding-left: 20px; }
.left, .right { width: 0; height: 0; border: 3px solid transparent; }
.left { border-right: 4px solid #555; border-left: 0; }
.right { border-left: 4px solid #555; border-right: 0; }
.arrows i { border-left-color: #c0c0c0; border-right-color: #c0c0c0; }
.sheets > .add { padding: 0 26px; }
.hgrip { margin: 6px 12px 0 auto; }
.hscroll { display: flex; width: 155px; height: 12px; margin: 5px 17px 0 0; }
.hscroll button { display: flex; align-items: center; justify-content: center; width: 12px; background: #fff; border: 1px solid #b5b5b5; }
.htrack { flex: 1; background: #dadada; }
.hthumb { width: 73%; height: 12px; background: #fff; border: 1px solid #b5b5b5; }

/* Status bar */
.status { display: flex; align-items: center; height: 17px; padding: 0 6px 0 5px; background: #f1f1f1; border-top: 1px solid #d2d2d2; }
.macro { margin-left: 14px; }
.views { display: flex; align-self: stretch; margin-left: auto; margin-right: 5px; }
.views button { display: flex; align-items: center; justify-content: center; width: 29px; }
.views .on { background: #c6c6c6; }
.zoom { appearance: none; width: 77px; height: 10px; margin: 0 4px; background: linear-gradient(#b0b0b0, #b0b0b0) no-repeat center / 100% 1px; }
.zoom::-webkit-slider-thumb { appearance: none; width: 4px; height: 9px; background: #666; }
.zval { margin-left: 6px; }
.taskbar { height: 1px; background: linear-gradient(90deg, #000 37px, #ddd 37px 304px, #000 304px); }
```
